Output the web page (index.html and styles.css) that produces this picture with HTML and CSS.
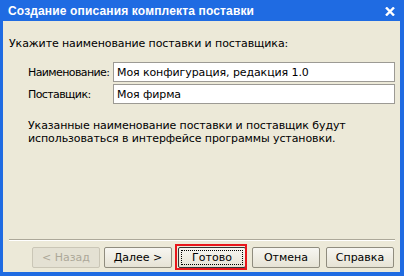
FILE: index.html
```html
<!DOCTYPE html>
<html lang="ru">
<head>
    <meta charset="UTF-8">
    <title>Создание описания комплекта поставки</title>
    <link rel="stylesheet" href="styles.css">
</head>
<body>
<div class="window">
    <div class="titlebar">
        <span class="title">Создание описания комплекта поставки</span>
        <svg class="close" width="10" height="9" viewBox="0 0 10 9">
            <path d="M1 0.5 L9 8.5 M9 0.5 L1 8.5" stroke="#fff" stroke-width="2.4"/>
        </svg>
    </div>
    <div class="content">
        <p class="prompt">Укажите наименование поставки и поставщика:</p>
        <div class="fields">
            <div class="row">
                <label for="nameInput">Наименование:</label>
                <input type="text" id="nameInput" value="Моя конфигурация, редакция 1.0">
            </div>
            <div class="row">
                <label for="vendorInput">Поставщик:</label>
                <input type="text" id="vendorInput" value="Моя фирма">
            </div>
        </div>
        <p class="note">Указанные наименование поставки и поставщик будут<br>использоваться в интерфейсе программы установки.</p>
        <div class="spacer"></div>
        <div class="separator"></div>
        <div class="buttons">
            <button class="btn" disabled>&lt; Назад</button>
            <button class="btn next">Далее &gt;</button>
            <button class="btn default marked"><span class="focus">Готово</span></button>
            <button class="btn">Отмена</button>
            <button class="btn">Справка</button>
        </div>
    </div>
</div>
</body>
</html>
```

FILE: styles.css
```css
body {
    margin: 0;
    padding: 0;
    font-family: "DejaVu Sans", Verdana, sans-serif;
    font-size: 11px;
    color: #000;
}

.window {
    width: 404px;
    height: 276px;
    box-sizing: border-box;
    background-color: #1f6be2;
    padding: 0 4px 4px 3px;
    display: flex;
    flex-direction: column;
}

.titlebar {
    height: 21px;
    display: flex;
    align-items: center;
    justify-content: space-between;
    padding: 0 5px 0 5px;
    color: #fff;
}

.title {
    font-family: "Liberation Sans", Arial, sans-serif;
    font-weight: bold;
    font-size: 12px;
    letter-spacing: 0.15px;
    padding-top: 1px;
}

.close {
    display: block;
    margin-top: 1px;
}

.content {
    flex: 1;
    background-color: #ece9d8;
    display: flex;
    flex-direction: column;
    padding: 0 5px 4px 6px;
}

.prompt {
    margin: 16px 0 0 0;
    line-height: 13px;
    letter-spacing: -0.1px;
}

.fields {
    margin-top: 12px;
    padding-left: 19px;
    display: flex;
    flex-direction: column;
    gap: 2px;
}

.row {
    display: flex;
    align-items: center;
}

.row label {
    width: 85px;
    flex-shrink: 0;
    white-space: nowrap;
    letter-spacing: -0.6px;
}

.row input {
    flex: 1;
    min-width: 0;
    height: 20px;
    box-sizing: border-box;
    border: 1px solid #9c9a94;
    background-color: #fff;
    font-family: "DejaVu Sans", Verdana, sans-serif;
    font-size: 11px;
    letter-spacing: -0.1px;
    padding: 0 3px;
    margin: 0;
    color: #000;
}

.note {
    margin: 15px 0 0 0;
    padding-left: 19px;
    line-height: 13px;
    letter-spacing: -0.1px;
}

.spacer {
    flex: 1;
}

.separator {
    height: 1px;
    background-color: #aca899;
    border-bottom: 1px solid #fff;
}

.buttons {
    margin-top: 6px;
    display: flex;
    justify-content: flex-end;
    gap: 6px;
    padding-right: 1px;
}

.btn {
    width: 68px;
    height: 21px;
    box-sizing: border-box;
    border: 1px solid #8f8c7e;
    border-radius: 2px;
    background: linear-gradient(#f7f6f1, #e6e3d5);
    font-family: "DejaVu Sans", Verdana, sans-serif;
    font-size: 11px;
    color: #000;
    padding: 0;
    margin: 0;
}

.btn:disabled {
    color: #aca899;
    border-color: #cac6b6;
    background: #e4e1d3;
}

.btn.next {
    margin-left: -2px;
}

.btn.default {
    border-color: #333;
    position: relative;
    padding: 2px;
}

.focus {
    display: flex;
    align-items: center;
    justify-content: center;
    height: 100%;
    box-sizing: border-box;
    border: 1px dotted #000;
}

.marked::after {
    content: "";
    position: absolute;
    top: -4px;
    left: -4px;
    right: -2px;
    bottom: -3px;
    border: 2px solid #e8161b;
}
```
